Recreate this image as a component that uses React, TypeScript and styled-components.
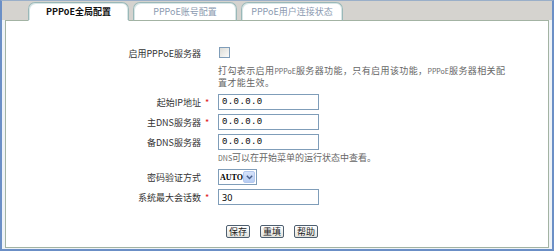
import styled, { createGlobalStyle } from 'styled-components'

const GlobalStyle = createGlobalStyle`
  html, body { margin: 0; padding: 0; background: #fff; }
  body {
    font-family: "Noto Sans CJK SC", "Noto Sans", sans-serif;
    font-size: 9px;
    color: #333;
  }
`

const Frame = styled.div`
  width: 554px;
  height: 251px;
  box-sizing: border-box;
  border: 2px solid #6b8fc6;
  border-top: 1px solid #9aafc9;
  background: #eef3f7;
  display: flex;
  flex-direction: column;
`

const TabStrip = styled.div`
  height: 19px;
  flex: none;
  box-sizing: border-box;
  background: #d5d3cf;
  display: flex;
  align-items: flex-end;
  gap: 4px;
  padding-left: 26px;
`

const Tab = styled.div<{ $active?: boolean; $w: number }>`
  width: ${p => p.$w}px;
  height: 19px;
  margin-bottom: -1px;
  box-sizing: border-box;
  position: relative;
  z-index: 1;
  border: 1px solid #9ab8b8;
  border-bottom-color: ${p => (p.$active ? '#fff' : '#a3b3a3')};
  border-radius: 7px 7px 0 0;
  box-shadow: inset 1px 1px 0 #d8e6e6, inset -1px 0 0 #d8e6e6;
  background: #fff;
  display: flex;
  align-items: center;
  justify-content: center;
  font-weight: ${p => (p.$active ? 700 : 400)};
  color: ${p => (p.$active ? '#111' : '#8b9ab0')};
  cursor: pointer;
`

const Panel = styled.div`
  flex: 1;
  margin: 0 3px 1px;
  border: 1px solid #a3b3a3;
  background: #fff;
  padding-top: 22px;
  display: flex;
  flex-direction: column;
`

const Row = styled.div<{ $h?: number }>`
  display: grid;
  grid-template-columns: 195px 17px 1fr;
  align-items: center;
  height: ${p => (p.$h ? `${p.$h}px` : 'auto')};
`

const Label = styled.div`
  text-align: right;
  color: #333;
  white-space: nowrap;
`

const Required = styled.span`
  padding-left: 4px;
  color: #e0201a;
  font-size: 9px;
`

const Hint = styled.div<{ $lh: number; $w: number; $ls?: number }>`
  grid-column: 3;
  color: #666;
  line-height: ${p => p.$lh}px;
  width: ${p => p.$w}px;
  letter-spacing: ${p => p.$ls ?? 0}px;
`

const HintRow = styled(Row)<{ $pt: number; $pb: number }>`
  padding: ${p => p.$pt}px 0 ${p => p.$pb}px;
`

const Small = styled.span`
  font-size: 7px;
  letter-spacing: 0;
`

const Check = styled.input`
  appearance: none;
  margin: 2px 0 0 1px;
  width: 11px;
  height: 11px;
  box-sizing: border-box;
  border: 1px solid #7f9db9;
  background: linear-gradient(135deg, #dcdcd7, #fbfbfa);
`

const TextInput = styled.input<{ $mono?: boolean }>`
  width: 101px;
  height: 16px;
  box-sizing: border-box;
  margin: 0;
  border: 1px solid #7f9db9;
  padding: 0 3px;
  font-family: ${p => (p.$mono ? '"Liberation Mono", monospace' : '"Noto Sans", sans-serif')};
  font-size: 9px;
  letter-spacing: ${p => (p.$mono ? '0.4px' : '0')};
  color: #000;
  outline: none;
`

const SelectBox = styled.div`
  width: 39px;
  height: 16px;
  box-sizing: border-box;
  border: 1px solid #7f9db9;
  background: #fff;
  display: flex;
  align-items: center;
  padding-right: 1px;
`

const Select = styled.select`
  appearance: none;
  border: none;
  background: transparent;
  flex: 1;
  min-width: 0;
  padding: 0 0 0 1px;
  margin: 0;
  font-family: "Liberation Serif", serif;
  font-weight: 700;
  font-size: 8px;
  color: #000;
  outline: none;
`

const ArrowBox = styled.span`
  flex: none;
  width: 12px;
  height: 12px;
  border-radius: 2px;
  background: linear-gradient(#d6e3fa, #b7cdf3);
  border: 1px solid #b4c8ee;
  box-sizing: border-box;
  display: flex;
  align-items: center;
  justify-content: center;
`

const Buttons = styled.div`
  margin-top: 18px;
  display: flex;
  justify-content: center;
  gap: 10px;
  padding-right: 10px;
`

const Button = styled.button`
  height: 13px;
  padding: 0 2px;
  margin: 0;
  font-family: "Noto Sans CJK SC", sans-serif;
  font-size: 9px;
  line-height: 11px;
  color: #222;
  border: 1px solid #4e5f70;
  border-radius: 2px;
  background: linear-gradient(#ffffff, #e2e2dc);
  cursor: pointer;
`

export default function App() {
  return (
    <>
      <GlobalStyle />
      <Frame>
        <TabStrip>
          <Tab $active $w={101}>PPPoE全局配置</Tab>
          <Tab $w={104}>PPPoE账号配置</Tab>
          <Tab $w={102}>PPPoE用户连接状态</Tab>
        </TabStrip>
        <Panel>
          <Row $h={20}>
            <Label>启用PPPoE服务器</Label>
            <span />
            <div><Check type="checkbox" /></div>
          </Row>
          <HintRow $pt={2} $pb={4}>
            <Hint $lh={11} $w={292} $ls={0.4}>
              打勾表示启用<Small>PPPoE</Small>服务器功能，只有启用该功能，<Small>PPPoE</Small>服务器相关配置才能生效。
            </Hint>
          </HintRow>
          <Row $h={20}>
            <Label>起始IP地址</Label>
            <Required>*</Required>
            <div><TextInput $mono defaultValue="0.0.0.0" /></div>
          </Row>
          <Row $h={20}>
            <Label>主DNS服务器</Label>
            <Required>*</Required>
            <div><TextInput $mono defaultValue="0.0.0.0" /></div>
          </Row>
          <Row $h={20}>
            <Label>备DNS服务器</Label>
            <span />
            <div><TextInput $mono defaultValue="0.0.0.0" /></div>
          </Row>
          <HintRow $pt={0} $pb={3}>
            <Hint $lh={12} $w={300}><Small>DNS</Small>可以在开始菜单的运行状态中查看。</Hint>
          </HintRow>
          <Row $h={20}>
            <Label>密码验证方式</Label>
            <span />
            <div>
              <SelectBox>
                <Select defaultValue="AUTO">
                  <option>AUTO</option>
                  <option>PAP</option>
                  <option>CHAP</option>
                </Select>
                <ArrowBox>
                  <svg width="7" height="5" viewBox="0 0 7 5">
                    <path d="M0.8 0.8 L3.5 3.6 L6.2 0.8" fill="none" stroke="#4a5f8a" strokeWidth="1.4" />
                  </svg>
                </ArrowBox>
              </SelectBox>
            </div>
          </Row>
          <Row $h={20}>
            <Label>系统最大会话数</Label>
            <Required>*</Required>
            <div><TextInput defaultValue="30" /></div>
          </Row>
          <Buttons>
            <Button>保存</Button>
            <Button>重填</Button>
            <Button>帮助</Button>
          </Buttons>
        </Panel>
      </Frame>
    </>
  )
}
